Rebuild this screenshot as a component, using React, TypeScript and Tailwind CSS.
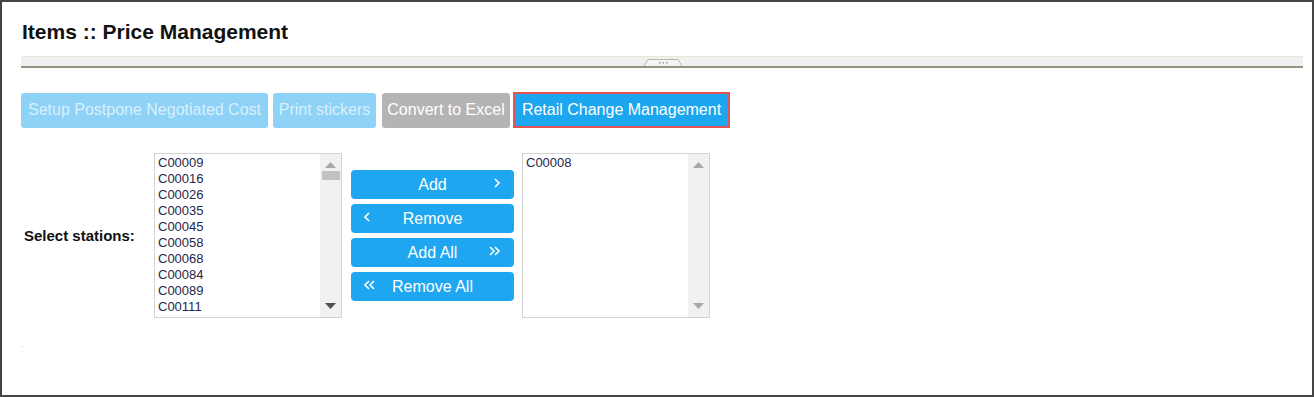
import React from 'react';

const font = { fontFamily: '"Liberation Sans", Arial, sans-serif' };

const leftItems = ['C00009', 'C00016', 'C00026', 'C00035', 'C00045', 'C00058', 'C00068', 'C00084', 'C00089', 'C00111'];
const rightItems = ['C00008'];

const Arrow = ({ up, color }: { up?: boolean; color: string }) => (
    <svg width="11" height="6" viewBox="0 0 11 6">
        {up ? <polygon points="0,6 5.5,0 11,6" fill={color} /> : <polygon points="0,0 5.5,6 11,0" fill={color} />}
    </svg>
);

const ListBox = ({ items, thumb }: { items: string[]; thumb?: boolean }) => (
    <div className="flex h-[165px] w-[188px] border border-[#d4d4d4] bg-white">
        <div className="flex-1 overflow-hidden pl-[3px] pt-[1px] text-[13px] leading-[16px] text-[#27264a]">
            {items.map((i) => (
                <div key={i} className="h-[16px]">
                    {i}
                </div>
            ))}
        </div>
        <div className="flex w-[21px] flex-col items-center bg-[#f1f1f1]">
            <div className="flex h-[17px] items-end justify-center pb-[3px]">
                <Arrow up color="#a8a8a8" />
            </div>
            {thumb && <div className="h-[9px] w-[18px] bg-[#c1c1c1]" />}
            <div className="flex-1" />
            <div className="flex h-[17px] items-start justify-center pt-[3px]">
                <Arrow color={thumb ? '#505050' : '#a8a8a8'} />
            </div>
        </div>
    </div>
);

const Chevron = ({ dir, double }: { dir: 'l' | 'r'; double?: boolean }) => {
    const one = dir === 'r' ? 'M1 1 L5 5 L1 9' : 'M5 1 L1 5 L5 9';
    return (
        <svg width={double ? 12 : 7} height="10" viewBox={double ? '0 0 12 10' : '0 0 7 10'} fill="none" stroke="white" strokeWidth="1.6">
            <path d={one} />
            {double && <path d={one} transform="translate(5 0)" />}
        </svg>
    );
};

const MoveButton = ({ label, left, right }: { label: string; left?: React.ReactNode; right?: React.ReactNode }) => (
    <button className="relative flex h-[29px] w-[163px] items-center justify-center rounded-[4px] bg-[#1ea7f0] text-[16px] text-white">
        {left && <span className="absolute left-[13px] top-[8px] flex">{left}</span>}
        <span>{label}</span>
        {right && <span className="absolute right-[13px] top-[8px] flex">{right}</span>}
    </button>
);

export default function App() {
    return (
        <div style={font} className="relative h-[397px] w-[1314px] overflow-hidden border-2 border-[#444444] bg-white">
            <div className="pl-[19px] pr-[9px]">
                <h1 className="ml-[1px] mt-[17px] h-[26px] text-[21px] font-bold leading-[26px] text-[#111111]">Items :: Price Management</h1>

                <div className="relative mt-[11px] h-[12px] border-t border-b-2 border-t-[#e8e7d8] border-b-[#93927f] bg-[#f0f0f0]">
                    <svg className="absolute left-[622px] top-[1px]" width="40" height="8" viewBox="0 0 40 8">
                        <path d="M1 8 L5 1.5 L35 1.5 L39 8" fill="#f4f4f4" stroke="#b8b8b0" strokeWidth="1" />
                        <rect x="16" y="4" width="1.5" height="1.5" fill="#9a9a9a" />
                        <rect x="19.5" y="4" width="1.5" height="1.5" fill="#9a9a9a" />
                        <rect x="23" y="4" width="1.5" height="1.5" fill="#9a9a9a" />
                    </svg>
                </div>

                <div className="mt-[24px] flex items-center text-[16px]">
                    <button className="h-[35px] w-[247px] rounded-[3px] bg-[#8ed2f7] text-[#d9f0fc]">Setup Postpone Negotiated Cost</button>
                    <button className="ml-[5px] h-[35px] w-[103px] rounded-[3px] bg-[#8ed2f7] text-[#d9f0fc]">Print stickers</button>
                    <button className="ml-[6px] h-[35px] w-[128px] rounded-[3px] bg-[#b4b4b4] text-white">Convert to Excel</button>
                    <button className="ml-[3px] h-[36px] w-[217px] border-2 border-[#e25454] bg-[#1ba6ef] text-white">Retail Change Management</button>
                </div>

                <div className="mt-[25px] flex items-center">
                    <div className="w-[133px] shrink-0 pl-[3px] pt-[2px] text-[15px] font-bold text-[#111111]">Select stations:</div>
                    <ListBox items={leftItems} thumb />
                    <div className="ml-[9px] flex flex-col gap-[5px]">
                        <MoveButton label="Add" right={<Chevron dir="r" />} />
                        <MoveButton label="Remove" left={<Chevron dir="l" />} />
                        <MoveButton label="Add All" right={<Chevron dir="r" double />} />
                        <MoveButton label="Remove All" left={<Chevron dir="l" double />} />
                    </div>
                    <div className="ml-[8px]">
                        <ListBox items={rightItems} />
                    </div>
                </div>

                <div className="ml-[1px] mt-[28px] h-[1px] w-[1px] bg-[#cccccc]" />
            </div>
        </div>
    );
}
